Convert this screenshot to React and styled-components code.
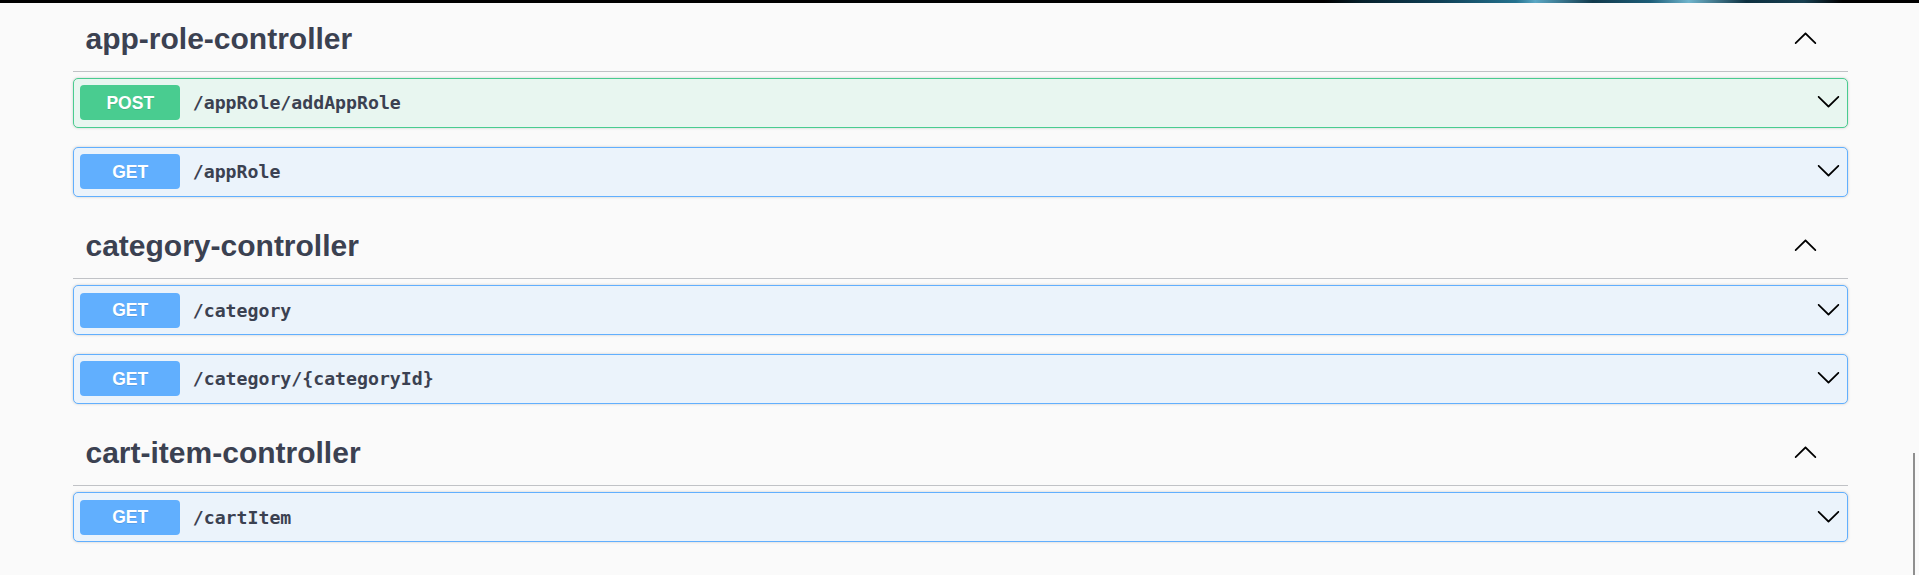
import React from 'react';
import styled, { createGlobalStyle } from 'styled-components';

const GlobalStyle = createGlobalStyle`
  html, body {
    margin: 0;
    padding: 0;
    background: #fafafa;
  }
  body {
    font-family: 'Liberation Sans', Arial, sans-serif;
    color: #3b4151;
  }
`;

const methodColors = {
  post: '#49cc90',
  get: '#61affe',
};

const methodTints = {
  post: '#e8f6f0',
  get: '#ebf3fb',
};

const Page = styled.div`
  min-height: 575px;
`;

const TopBar = styled.div`
  height: 3px;
  background: linear-gradient(
    90deg,
    #000 0%,
    #000 69%,
    #06202c 71%,
    #0f3f55 75%,
    #24728f 79%,
    #5aa7c4 80%,
    #123a4c 83%,
    #1c5d78 86%,
    #6fb4cc 88%,
    #0d3040 91%,
    #173f50 94%,
    #000 96%,
    #000 100%
  );
`;

const Wrapper = styled.div`
  width: 1775px;
  margin-left: 73px;
  padding-top: 5px;
`;

const TagSection = styled.section`
  display: flex;
  flex-direction: column;
`;

const TagHeader = styled.div`
  display: flex;
  align-items: center;
  min-height: 37.5px;
  padding: 12.5px 30px 12.5px 12.5px;
  margin-bottom: 6.25px;
  border-bottom: 1px solid rgba(59, 65, 81, 0.3);
`;

const TagTitle = styled.h3`
  flex: 1;
  margin: 0;
  padding-bottom: 1px;
  font-family: 'Liberation Sans', Arial, sans-serif;
  font-size: 30px;
  font-weight: 700;
  line-height: 30px;
  color: #3b4151;
`;

const ToggleIcon = styled.svg`
  width: 25px;
  height: 25px;
  flex-shrink: 0;
  align-self: ${({ down }) => (down ? 'center' : 'flex-start')};
  margin-top: ${({ down }) => (down ? '0' : '4px')};
  ${({ down }) => (down ? 'transform: rotate(180deg);' : '')}
`;

const Opblock = styled.div`
  margin: 0 0 18.75px;
  border: 1px solid ${({ method }) => methodColors[method]};
  border-radius: 5px;
  background: ${({ method }) => methodTints[method]};
  box-shadow: 0 0 3px rgba(0, 0, 0, 0.19);
`;

const Summary = styled.div`
  display: flex;
  align-items: center;
  padding: 6.5px 6.25px;
`;

const MethodBadge = styled.span`
  min-width: 100px;
  padding: 7.5px 0;
  border-radius: 4px;
  background: ${({ method }) => methodColors[method]};
  color: #fff;
  font-family: 'Liberation Sans', Arial, sans-serif;
  font-size: 17.5px;
  font-weight: 700;
  line-height: 20px;
  text-align: center;
  text-shadow: 0 1px 0 rgba(0, 0, 0, 0.1);
`;

const Path = styled.span`
  flex: 1;
  padding: 0 12.5px;
  font-family: 'DejaVu Sans Mono', 'Liberation Mono', monospace;
  font-size: 18.2px;
  font-weight: 700;
  color: #3b4151;
`;

const ScrollThumb = styled.div`
  position: fixed;
  right: 4px;
  top: 453px;
  bottom: 0;
  width: 2px;
  background: #8f8f8f;
`;

const arrowPath =
  'M17.418 14.908C17.69 15.176 18.127 15.176 18.397 14.908C18.667 14.64 18.668 14.207 18.397 13.939L10.489 6.109C10.219 5.841 9.782 5.841 9.51 6.109L1.602 13.939C1.332 14.207 1.332 14.64 1.602 14.908C1.873 15.176 2.311 15.176 2.581 14.908L10 7.767L17.418 14.908Z';

const Arrow = ({ down }) => (
  <ToggleIcon viewBox="0 0 20 20" down={down ? 1 : 0}>
    <path d={arrowPath} fill="#000" />
  </ToggleIcon>
);

const tags = [
  {
    name: 'app-role-controller',
    ops: [
      { method: 'post', path: '/appRole/addAppRole' },
      { method: 'get', path: '/appRole' },
    ],
  },
  {
    name: 'category-controller',
    ops: [
      { method: 'get', path: '/category' },
      { method: 'get', path: '/category/{categoryId}' },
    ],
  },
  {
    name: 'cart-item-controller',
    ops: [{ method: 'get', path: '/cartItem' }],
  },
];

const App = () => {
  return (
    <Page>
      <GlobalStyle />
      <TopBar />
      <Wrapper>
        {tags.map((tag) => (
          <TagSection key={tag.name}>
            <TagHeader>
              <TagTitle>{tag.name}</TagTitle>
              <Arrow />
            </TagHeader>
            {tag.ops.map((op) => (
              <Opblock key={op.path} method={op.method}>
                <Summary>
                  <MethodBadge method={op.method}>{op.method.toUpperCase()}</MethodBadge>
                  <Path>{op.path}</Path>
                  <Arrow down />
                </Summary>
              </Opblock>
            ))}
          </TagSection>
        ))}
      </Wrapper>
      <ScrollThumb />
    </Page>
  );
};

export default App;
